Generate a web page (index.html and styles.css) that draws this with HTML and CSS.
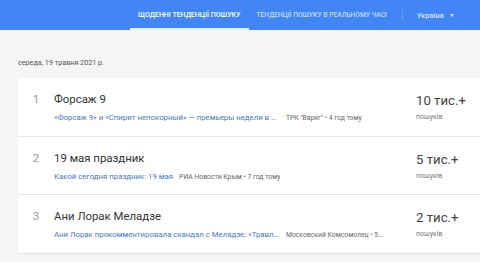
FILE: index.html
```html
<!DOCTYPE html>
<html>
	<head>
		<meta charset="UTF-8">
		<title>Тенденції пошуку</title>
		<link rel="stylesheet" href="styles.css">
	</head>
	<body>
		<div class="header">
			<div class="tabs">
				<a href="javascript:;" class="tab active">Щоденні тенденції пошуку</a>
				<a href="javascript:;" class="tab realtime">Тенденції пошуку в реальному часі</a>
			</div>
			<div class="sep"></div>
			<a href="javascript:;" class="geo">Україна <span class="arrow"></span></a>
		</div>
		<div class="main">
			<div class="date">середа, 19 травня 2021 р.</div>
			<ul class="feed">
				<li class="item">
					<div class="num">1</div>
					<div class="details">
						<div class="title">Форсаж 9</div>
						<div class="snippet">
							<a href="javascript:;" class="link">«Форсаж 9» и «Спирит непокорный» — премьеры недели в кино</a>
							<span class="source">ТРК "Варяг" • 4 год тому</span>
						</div>
					</div>
					<div class="count">
						<div class="value">10 тис.+</div>
						<div class="label">пошуків</div>
					</div>
				</li>
				<li class="item">
					<div class="num">2</div>
					<div class="details">
						<div class="title">19 мая праздник</div>
						<div class="snippet">
							<a href="javascript:;" class="link">Какой сегодня праздник: 19 мая</a>
							<span class="source">РИА Новости Крым • 7 год тому</span>
						</div>
					</div>
					<div class="count">
						<div class="value">5 тис.+</div>
						<div class="label">пошуків</div>
					</div>
				</li>
				<li class="item">
					<div class="num">3</div>
					<div class="details">
						<div class="title">Ани Лорак Меладзе</div>
						<div class="snippet">
							<a href="javascript:;" class="link">Ани Лорак прокомментировала скандал с Меладзе: «Травля продолжается»</a>
							<span class="source">Московский Комсомолец • 5 год тому</span>
						</div>
					</div>
					<div class="count">
						<div class="value">2 тис.+</div>
						<div class="label">пошуків</div>
					</div>
				</li>
			</ul>
		</div>
	</body>
</html>
```

FILE: styles.css
```css
html, body{
	margin: 0;
	padding: 0;
}
body{
	width: 480px;
	height: 262px;
	overflow: hidden;
	background-color: #f5f5f5;
	font-family: Roboto, "Noto Sans", sans-serif;
	color: #333;
}
ul{
	margin: 0;
	padding: 0;
}
li{
	list-style: none;
}
a{
	text-decoration: none;
}
.header{
	height: 30px;
	background-color: #4285f4;
	display: flex;
	align-items: stretch;
	padding-left: 130px;
}
.tabs{
	display: flex;
}
.tab{
	display: flex;
	align-items: center;
	padding: 2px 8px 0;
	font-size: 7px;
	font-weight: 500;
	text-transform: uppercase;
	color: rgba(255,255,255,.7);
	border-bottom: 2px solid transparent;
	box-sizing: border-box;
}
.tab.active{
	color: #fff;
	border-bottom-color: rgba(255,255,255,.85);
}
.tab.realtime{
	font-size: 6.7px;
	padding-left: 8px;
}
.sep{
	width: 1px;
	height: 12px;
	align-self: center;
	background-color: rgba(255,255,255,.2);
	margin-left: 7px;
	margin-right: 14px;
}
.geo{
	display: flex;
	align-items: center;
	padding-top: 1px;
	font-size: 7.4px;
	font-weight: 500;
	color: rgba(255,255,255,.8);
}
.arrow{
	width: 0;
	height: 0;
	border-left: 2.5px solid transparent;
	border-right: 2.5px solid transparent;
	border-top: 3px solid rgba(255,255,255,.8);
	margin-left: 6px;
}
.main{
	padding-left: 18px;
}
.date{
	font-size: 7.2px;
	color: #555;
	padding-top: 28px;
	height: 20px;
}
.feed{
	width: 480px;
	background-color: #fff;
	box-shadow: 0 1px 1px rgba(0,0,0,.08);
}
.item{
	display: flex;
	height: 58px;
	border-bottom: 1px solid #e6e6e6;
	box-sizing: border-box;
}
.item:first-child{
	height: 59px;
}
.item:last-child{
	border-bottom: none;
}
.num{
	width: 36px;
	text-align: center;
	font-size: 11.6px;
	color: #999;
	padding-top: 14px;
}
.details{
	width: 362px;
	padding-top: 13px;
}
.title{
	font-size: 11.4px;
	color: #333;
	height: 20px;
	padding-top: 1px;
	box-sizing: border-box;
}
.snippet{
	display: flex;
	align-items: baseline;
	width: 330px;
	font-size: 7.8px;
	white-space: nowrap;
	margin-top: 2px;
}
.link{
	color: #4a78c2;
	overflow: hidden;
	text-overflow: ellipsis;
	max-width: 226px;
	flex-shrink: 0;
}
.source{
	color: #666;
	font-size: 6.8px;
	margin-left: 6px;
	overflow: hidden;
	text-overflow: ellipsis;
	min-width: 0;
}
.count{
	padding-top: 15px;
}
.value{
	font-size: 13.2px;
	color: #444;
	height: 19px;
}
.label{
	font-size: 7px;
	color: #777;
	margin-top: 1px;
}
```
